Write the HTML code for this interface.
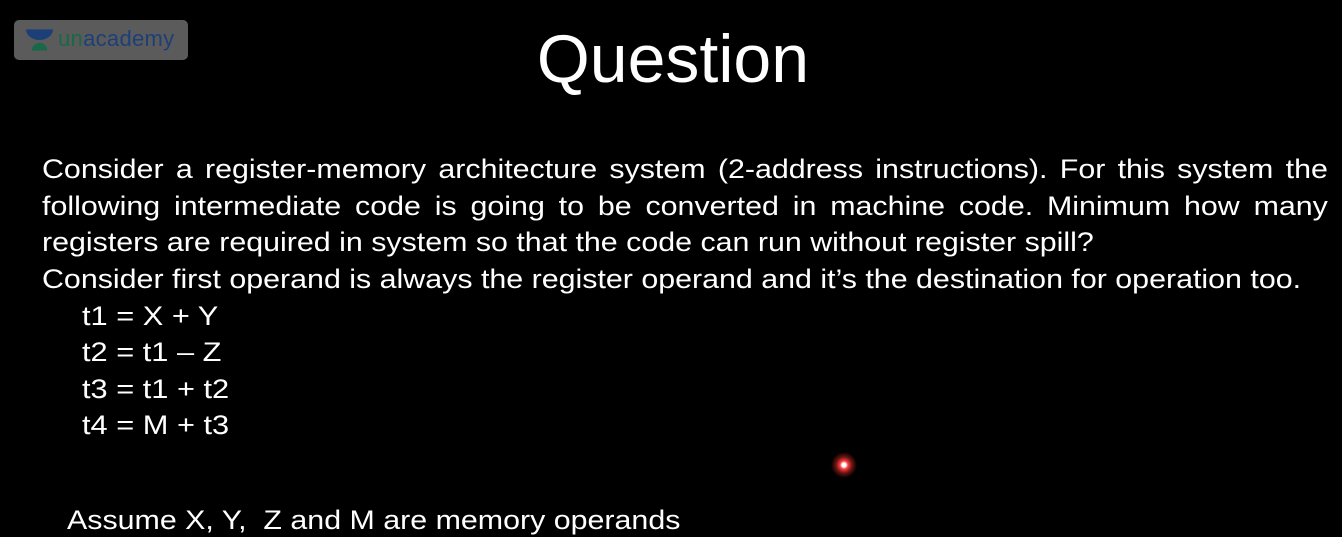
<!DOCTYPE html>
<html><head><style>
body{margin:0;width:1342px;height:537px;background:#000;overflow:hidden;position:relative;font-family:"Liberation Sans",Arial,sans-serif;color:#fff}
.logo{position:absolute;left:14px;top:20px;width:174px;height:40px;background:#5b5b5b;border-radius:5px}
.logo .t{position:absolute;left:44px;top:6px;font-size:22px;color:#1d3f78;letter-spacing:0.3px}
.logo .t span{color:#19684a}
h1{position:absolute;left:0;width:1346px;top:20px;margin:0;text-align:center;font-weight:normal;font-size:68px}
.s{transform:scaleX(1.125);transform-origin:0 0}
.p{position:absolute;left:42px;width:1143px;font-size:27px;line-height:36.7px;top:151px;text-align:justify}
.p div{text-align:justify;text-align-last:justify}
.p div.n{text-align-last:left}
.c{position:absolute;left:82px;top:298px;font-size:27px;line-height:36.3px}
.a{position:absolute;left:67px;top:505px;font-size:27px}
.dot{position:absolute;left:831px;top:452px;width:26px;height:26px;border-radius:50%;background:radial-gradient(circle,#fff 0,#fff 2px,#ff4040 4px,rgba(220,40,40,.5) 8px,rgba(0,0,0,0) 13px)}
</style></head><body>
<div class="logo">
<svg style="position:absolute;left:12px;top:9px" width="27" height="22" viewBox="0 0 28 22"><path d="M0 0H28A14 11 0 0 1 0 0Z" fill="#1d3f78"/><path d="M6 22A8 8 0 0 1 22 22Z" fill="#19684a"/></svg>
<div class="t"><span>un</span>academy</div>
</div>
<h1>Question</h1>
<div class="p s">
<div>Consider a register-memory architecture system (2-address instructions). For this system the</div>
<div>following intermediate code is going to be converted in machine code. Minimum how many</div>
<div class="n">registers are required in system so that the code can run without register spill?</div>
<div class="n">Consider first operand is always the register operand and it’s the destination for operation too.</div>
</div>
<div class="c s" style="transform:scaleX(1.14)">t1 = X + Y<br>t2 = t1 – Z<br>t3 = t1 + t2<br>t4 = M + t3</div>
<div class="a s">Assume X, Y,&nbsp; Z and M are memory operands</div>
<div class="dot"></div>
</body></html>
